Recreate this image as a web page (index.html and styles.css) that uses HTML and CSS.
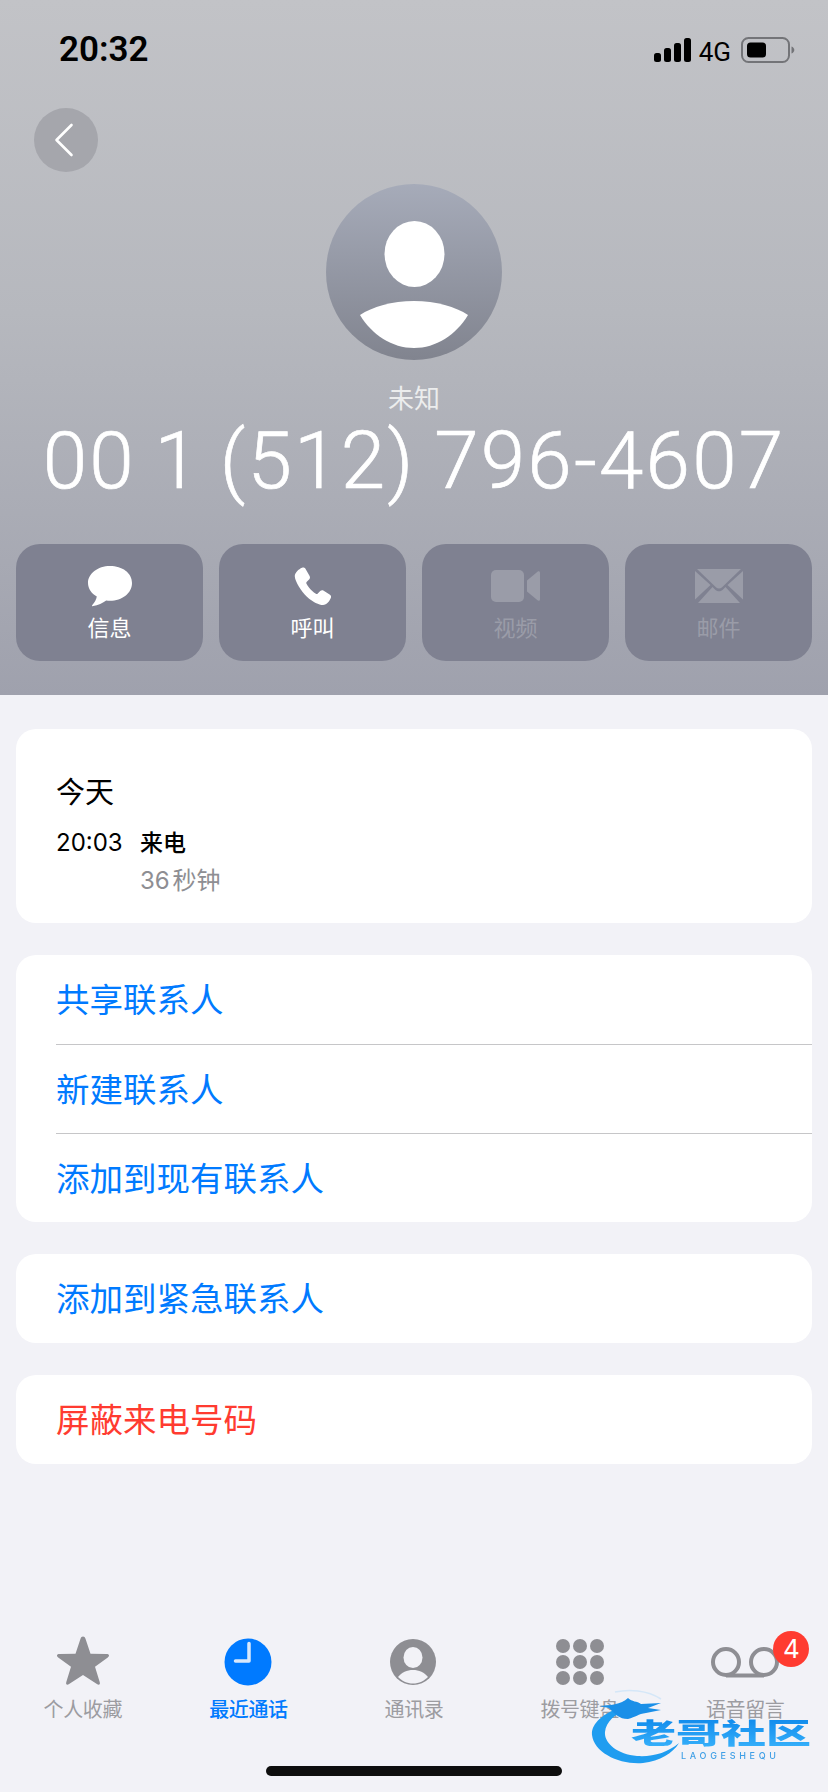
FILE: index.html
```html
<!DOCTYPE html>
<html lang="zh-CN">
<head>
<meta charset="utf-8">
<title>未知</title>
<link rel="stylesheet" href="styles.css">
</head>
<body>
<div class="page">
  <header class="hero">
    <div class="status">
      <span class="clock">20:32</span>
      <div class="status-right">
        <svg class="signal" width="37" height="24" viewBox="0 0 37 24"><rect x="0" y="15" width="7" height="9" rx="2.5"/><rect x="10" y="10" width="7" height="14" rx="2.5"/><rect x="20" y="5" width="7" height="19" rx="2.5"/><rect x="30" y="0" width="7" height="24" rx="2.5"/></svg>
        <span class="net">4G</span>
        <svg class="battery" width="54" height="26" viewBox="0 0 54 26"><rect x="1" y="1" width="47" height="24" rx="6.5" fill="none" stroke="#737478" stroke-width="2"/><rect x="6" y="5.500" width="19" height="15" rx="3.500" fill="#000"/><path d="M50.500 9.500c1.800.6 2.800 2 2.800 3.500s-1 2.900-2.800 3.500z" fill="#737478"/></svg>
      </div>
    </div>
    <button class="back" aria-label="返回">
      <svg width="22" height="34" viewBox="0 0 22 34"><path d="M18.500 2 3.500 17l15 15" fill="none" stroke="#fff" stroke-width="2.600" stroke-linecap="round" stroke-linejoin="round"/></svg>
    </button>
    <div class="avatar">
      <svg width="176" height="176" viewBox="0 0 176 176">
        <ellipse cx="88.500" cy="70" rx="30" ry="33" fill="#fff"/>
        <path d="M34 131C46 123 66 117 88 117s42 6 54 14c-12 20-32 33-54 33s-42-13-54-33z" fill="#fff"/>
      </svg>
    </div>
    <div class="name">未知</div>
    <div class="number">00 1 (512) 796-4607</div>
    <div class="actions">
      <div class="action">
        <svg width="46" height="42" viewBox="0 0 46 42"><path d="M23 1C10.800 1 1 8.600 1 18c0 5.600 3.500 10.500 8.800 13.600-.5 3-2.200 6.100-4.500 8.300-.7.700 0 1.400.9 1.200 4.700-.8 9.700-3 13-5.600 1.200.2 2.500.3 3.800.3 12.200 0 22-7.600 22-17.800S35.200 1 23 1z" fill="#fff"/></svg>
        <span>信息</span>
      </div>
      <div class="action">
        <svg width="38" height="38" viewBox="0 0 38 38"><path d="M8 .8C9.600.1 10.800.6 11.600 2l4 7c.7 1.300.5 2.500-.5 3.500l-2.300 2.200c-.6.600-.7 1.200-.3 2 1.500 2.700 3.300 5 5.500 7.100 1.300 1.200 2.600 2.200 3.900 2.900.7.400 1.300.3 1.900-.3l2.400-2.300c1-1 2.300-1.200 3.500-.4l5.900 3.700c1.400.9 1.900 2.100 1.200 3.600-1.100 2.800-3.900 7-7.800 7-3.900 0-10.200-2.900-16.100-8.300C7.200 24.200 1.200 14.700.8 9.500.6 5.800 4.800 2.100 8 .8z" fill="#fff"/></svg>
        <span>呼叫</span>
      </div>
      <div class="action off">
        <svg width="50" height="34" viewBox="0 0 50 34"><rect x="0" y="1" width="33" height="32" rx="5"/><path d="M36 11.500 46.500 2.700c1.200-1 2.500-.3 2.500 1.100v26.400c0 1.400-1.300 2.100-2.500 1.100L36 22.500z"/></svg>
        <span>视频</span>
      </div>
      <div class="action off">
        <svg width="48" height="34" viewBox="0 0 48 34"><path d="M2 0h44L26.800 18.400c-1.600 1.500-4 1.500-5.600 0z"/><path d="M0 2v28.500L15.500 16z"/><path d="M48 2v28.500L32.500 16z"/><path d="M3 34h42L30.500 18 27.500 21c-2 1.800-5 1.800-7 0L17.500 18z"/></svg>
        <span>邮件</span>
      </div>
    </div>
  </header>

  <main class="content">
    <section class="card history">
      <h2 class="day">今天</h2>
      <div class="call">
        <span class="call-time">20:03</span>
        <div class="call-info">
          <span class="call-type">来电</span>
          <span class="call-dur">36 秒钟</span>
        </div>
      </div>
    </section>
    <section class="card">
      <div class="row"><span class="link">共享联系人</span></div>
      <div class="row"><span class="link">新建联系人</span></div>
      <div class="row"><span class="link">添加到现有联系人</span></div>
    </section>
    <section class="card">
      <div class="row"><span class="link">添加到紧急联系人</span></div>
    </section>
    <section class="card">
      <div class="row"><span class="link danger">屏蔽来电号码</span></div>
    </section>
  </main>

  <nav class="tabs">
    <div class="tab">
      <svg width="60" height="54" viewBox="0 0 60 54"><path d="M30 3.500c1.200 0 2 .8 2.500 2.200l5 15 16 .3c2.700 0 3.400 1.800 1.300 3.400L42 33.800l4.700 15.100c.8 2.500-.7 3.600-2.800 2.100L30 41.900 16.100 51c-2.100 1.500-3.600.4-2.800-2.100L18 33.800 5.200 24.400c-2.100-1.600-1.400-3.400 1.300-3.400l16-.3 5-15c.5-1.400 1.300-2.200 2.500-2.200z"/></svg>
      <span>个人收藏</span>
    </div>
    <div class="tab active">
      <svg width="60" height="54" viewBox="0 0 60 54"><circle cx="30" cy="29" r="23.500"/><path d="M31 10.500v17.500H17.500" fill="none" stroke="#d9e8fb" stroke-width="3.500" stroke-linecap="round" stroke-linejoin="round"/></svg>
      <span>最近通话</span>
    </div>
    <div class="tab">
      <svg width="60" height="54" viewBox="0 0 60 54"><circle cx="29" cy="29" r="23"/><ellipse cx="29" cy="24.500" rx="9.500" ry="10.500" fill="#f2f2f7"/><path d="M14 44c3.500-4.500 9-7 15-7s11.500 2.500 15 7c-3.500 3.800-9 6.500-15 6.500s-11.500-2.700-15-6.500z" fill="#f2f2f7"/></svg>
      <span>通讯录</span>
    </div>
    <div class="tab">
      <svg width="60" height="54" viewBox="0 0 60 54"><g><circle cx="13" cy="13" r="7"/><circle cx="30" cy="13" r="7"/><circle cx="47" cy="13" r="7"/><circle cx="13" cy="29" r="7"/><circle cx="30" cy="29" r="7"/><circle cx="47" cy="29" r="7"/><circle cx="13" cy="45" r="7"/><circle cx="30" cy="45" r="7"/><circle cx="47" cy="45" r="7"/></g></svg>
      <span>拨号键盘</span>
    </div>
    <div class="tab">
      <svg width="80" height="54" viewBox="0 0 80 54"><path d="M21 42.500h38" fill="none" stroke="#8e8e93" stroke-width="4"/><circle cx="21" cy="29" r="13" fill="none" stroke="#8e8e93" stroke-width="4"/><circle cx="59" cy="29" r="13" fill="none" stroke="#8e8e93" stroke-width="4"/></svg>
      <span>语音留言</span>
      <b class="badge">4</b>
    </div>
  </nav>

  <div class="home-bar"></div>

  <div class="watermark">
    <svg class="wm-art" width="235" height="85" viewBox="0 0 235 85">
      <path d="M40 21C16 28 6 40 7 50c2 18 28 30 51 28 17-2 30-10 36-20-12 10-26 14-42 13-20-2-33-13-32-24 1-10 10-19 24-23z" fill="#1f9df0"/>
      <path d="M14 21c11-1 22-1 29-8 4 4 9 3 13 6l20-1-13 5 13 2-15 3c-8 1-10 4-18 6-9 0-13-5-19-11z" fill="#1a8fe8"/>
      <path d="M30 7c14-3 32-2 46 7" fill="none" stroke="#d5e7f8" stroke-width="1.500"/>
    </svg>
    <span class="wm-title">老哥社区</span>
    <span class="wm-sub">LAOGESHEQU</span>
  </div>
</div>
</body>
</html>
```
FILE: styles.css
```css
* { box-sizing: border-box; }
html, body { margin: 0; padding: 0; }
body {
  font-family: "Inter", "Noto Sans CJK SC", sans-serif;
  background: #f2f2f7;
}
.page {
  position: relative;
  width: 828px;
  height: 1792px;
  overflow: hidden;
  display: flex;
  flex-direction: column;
  background: #f2f2f7;
}

/* hero */
.hero {
  height: 695px;
  flex: none;
  background: linear-gradient(180deg, #c2c3c7 0%, #b6b8be 45%, #9fa1ad 100%);
  display: flex;
  flex-direction: column;
}
.status {
  height: 108px;
  padding: 36px 34px 0 59px;
  display: flex;
  justify-content: space-between;
  align-items: flex-start;
}
.clock {
  font: 600 35px/28px "Roboto", sans-serif;
  color: #000;
}
.status-right {
  display: flex;
  align-items: flex-start;
  margin-right: -1px;
}
.signal { margin-top: 2px; fill: #000; }
.net {
  font: 400 26px/26px "Roboto", sans-serif;
  color: #000;
  margin: 3px 10px 0 8px;
}
.battery { margin-top: 1px; }

.back {
  width: 64px;
  height: 64px;
  margin-left: 34px;
  padding: 0 5px 0 0;
  border: 0;
  border-radius: 50%;
  background: #a5a6ac;
  display: flex;
  align-items: center;
  justify-content: center;
  flex: none;
}
.avatar {
  width: 176px;
  height: 176px;
  margin: 12px auto 0;
  border-radius: 50%;
  overflow: hidden;
  flex: none;
  background: linear-gradient(180deg, #a6abb9 0%, #81848f 100%);
}
.name {
  margin-top: 21px;
  text-align: center;
  font: 400 26px/32px "Noto Sans CJK SC", sans-serif;
  color: #eceded;
}
.number {
  margin-top: 0;
  text-align: center;
  white-space: nowrap;
  font: 300 80px/96px "Roboto", sans-serif;
  color: #fff;
  letter-spacing: 2.200px;
  word-spacing: -3px;
  -webkit-text-stroke: .7px #fff;
}
.actions {
  margin-top: 35px;
  padding: 0 16px;
  display: grid;
  grid-template-columns: repeat(4, 1fr);
  gap: 16px;
}
.action {
  height: 117px;
  border-radius: 24px;
  background: #7f8191;
  color: #fff;
  display: flex;
  flex-direction: column;
  align-items: center;
  padding-top: 21px;
  fill: #fff;
}
.action svg { height: 42px; flex: none; }
.action span {
  font: 400 22px/28px "Noto Sans CJK SC", sans-serif;
  margin-top: 5px;
}
.action.off { color: #9a9ca8; fill: #9a9ca8; }

/* cards */
.content {
  padding: 34px 16px 0;
  display: flex;
  flex-direction: column;
  gap: 32px;
  flex: none;
}
.card {
  background: #fff;
  border-radius: 20px;
  overflow: hidden;
}
.history {
  height: 194px;
  padding: 41px 40px 0;
}
.day {
  margin: 0;
  font: 400 29px/40px "Noto Sans CJK SC", sans-serif;
  color: #000;
}
.call {
  margin-top: 15px;
  display: flex;
}
.call-time {
  width: 84px;
  margin-top: 2px;
  font: 400 24px/32px "Inter", sans-serif;
  color: #000;
}
.call-info {
  display: flex;
  flex-direction: column;
  gap: 9px;
}
.call-type {
  font: 500 23px/32px "Noto Sans CJK SC", sans-serif;
  color: #000;
}
.call-dur {
  font: 400 24px/30px "Inter", "Noto Sans CJK SC", sans-serif;
  color: #8e8e93;
  word-spacing: -4px;
}
.row {
  height: 89px;
  margin-left: 40px;
  padding-bottom: 3px;
  display: flex;
  align-items: center;
  border-top: 1px solid #c6c6c8;
}
.row:first-child { border-top: 0; }
.link {
  font: 400 33.500px/44px "Noto Sans CJK SC", sans-serif;
  color: #007aff;
}
.danger { color: #ff3b30; }

/* tabs */
.tabs {
  margin-top: auto;
  display: grid;
  grid-template-columns: repeat(5, 1fr);
  height: 90px;
  margin-bottom: 69px;
}
.tab {
  position: relative;
  display: flex;
  flex-direction: column;
  align-items: center;
  fill: #8e8e93;
  color: #9c9ca1;
}
.tab svg { flex: none; }
.tab span {
  font: 400 20px/26px "Noto Sans CJK SC", sans-serif;
  letter-spacing: -.4px;
  margin-top: 9px;
}
.tab.active { fill: #007aff; color: #007aff; }
.tab.active span { font-weight: 500; }
.badge {
  position: absolute;
  left: 111px;
  top: -2px;
  width: 36px;
  height: 36px;
  border-radius: 50%;
  background: #ff3b30;
  color: #fff;
  font: 400 26px/36px "Inter", sans-serif;
  text-align: center;
}
.home-bar {
  position: absolute;
  left: 266px;
  top: 1766px;
  width: 296px;
  height: 10px;
  border-radius: 5px;
  background: #0e0e0e;
}

/* watermark */
.watermark {
  position: absolute;
  left: 585px;
  top: 1685px;
  width: 235px;
  height: 85px;
  filter: blur(.5px);
}
.wm-art { position: absolute; left: 0; top: 0; }
.wm-title {
  position: absolute;
  left: 46px;
  top: 30px;
  font: 900 30px/36px "Noto Sans CJK SC", sans-serif;
  white-space: nowrap;
  transform: scale(1.5, .95);
  transform-origin: 0 0;
  background: linear-gradient(180deg, #0c86ea, #38b2fb);
  -webkit-background-clip: text;
  background-clip: text;
  color: transparent;
}
.wm-sub {
  position: absolute;
  left: 96px;
  top: 65px;
  font: 500 9px/11px "Inter", sans-serif;
  letter-spacing: 3.700px;
  color: #3f9fe6;
  white-space: nowrap;
}
```
